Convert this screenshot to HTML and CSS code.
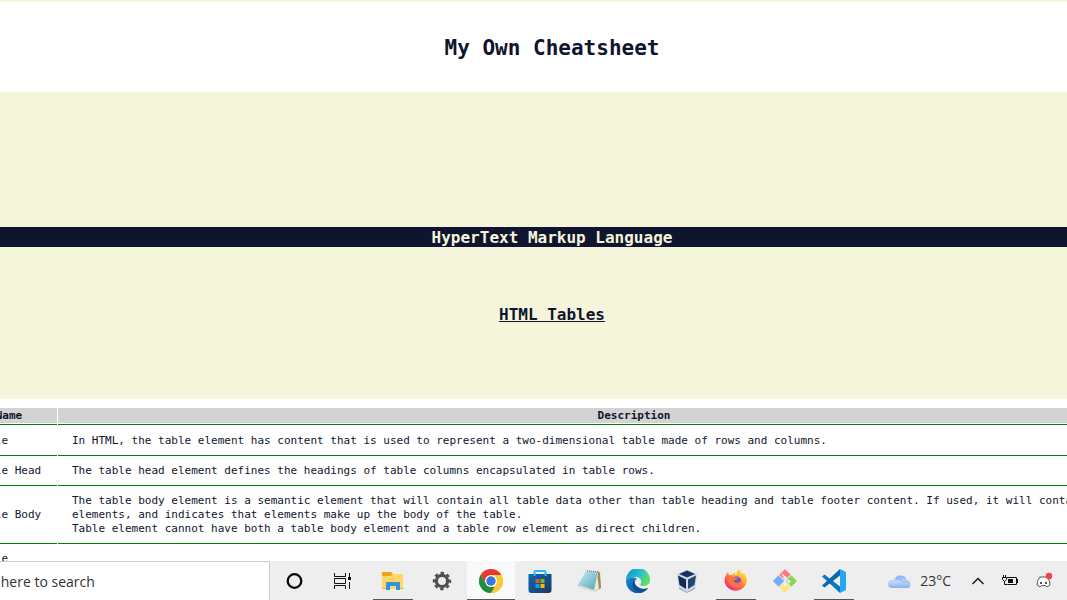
FILE: index.html
```html
<!DOCTYPE html>
<html lang="en">
<head>
<meta charset="utf-8">
<title>My Own Cheatsheet</title>
<link rel="stylesheet" href="styles.css">
</head>
<body>
<main class="viewport">
  <div class="page">
    <header class="title-band"><h1>My Own Cheatsheet</h1></header>
    <h2 class="language">HyperText Markup Language</h2>
    <h3 class="topic">HTML Tables</h3>
    <section class="sheet">
      <table>
        <thead>
          <tr><th class="name">Name</th><th>Description</th></tr>
        </thead>
        <tbody>
          <tr><td>Table</td><td>In HTML, the table element has content that is used to represent a two-dimensional table made of rows and columns.</td></tr>
          <tr><td>Table Head</td><td>The table head element defines the headings of table columns encapsulated in table rows.</td></tr>
          <tr><td>Table Body</td><td>The table body element is a semantic element that will contain all table data other than table heading and table footer content. If used, it will contain all<br>elements, and indicates that elements make up the body of the table.<br>Table element cannot have both a table body element and a table row element as direct children.</td></tr>
          <tr><td>Table</td><td></td></tr>
        </tbody>
      </table>
    </section>
  </div>
</main>
<footer class="taskbar">
  <div class="search"><input type="text" aria-label="Search" placeholder="Type here to search"></div>
  <nav class="apps">
    <button aria-label="Cortana"><svg width="24" height="24" viewBox="0 0 24 24"><circle cx="11.500" cy="12" r="6.8" fill="none" stroke="#0b0b0b" stroke-width="2.300"/></svg></button>
    <button aria-label="Task view"><svg width="24" height="24" viewBox="0 0 24 24" fill="none" stroke="#111" stroke-width="1"><path d="M2.500 4v3.500h11V4M2.500 20v-3.500h11V20M2.500 9.500h11v5h-11zM17.500 4v4M17.500 13v7"/><path d="M16 8h3v3h-3z" fill="#111" stroke="none"/></svg></button>
    <button class="running" aria-label="File Explorer"><svg width="24" height="24" viewBox="0 0 24 24"><path d="M1 4q0-1 1-1h8l2 2h9q1 0 1 1v14H1z" fill="#e7a613"/><path d="M1 7h9l2-2h10v15H1z" fill="#ffd765"/><path d="M5 21v-7q0-1 1-1h12q1 0 1 1v7h-4v-4H9v4z" fill="#3293df"/><path d="M1 19h4v1H1zM19 19h4v1h-4z" fill="#efb83a"/></svg></button>
    <button aria-label="Settings"><svg width="24" height="24" viewBox="0 0 24 24" fill="none" stroke="#505050"><circle cx="12" cy="12" r="5.600" stroke-width="3.200"/><circle cx="12" cy="12" r="8" stroke-width="2.400" stroke-dasharray="3.400 2.883" stroke-dashoffset="1.700"/></svg></button>
    <button class="running active" aria-label="Chrome"><svg width="24" height="24" viewBox="0 0 24 24"><circle cx="12" cy="12" r="12" fill="#fcc934"/><path d="M12 12 6.800 15 1.600 6A12 12 0 0 1 22.400 6H12z" fill="#e33b2e"/><path d="M1.600 6 6.800 15Q9 18.500 12 18h5.200L12 24A12 12 0 0 1 1.600 6z" fill="#1e8e3e"/><path d="M12 24l5.200-9Q19 10 17 6h5.400A12 12 0 0 1 12 24z" fill="#fcc934"/><circle cx="12" cy="12" r="6" fill="#fff"/><circle cx="12" cy="12" r="4.700" fill="#3478e5"/></svg></button>
    <button aria-label="Microsoft Store"><svg width="24" height="24" viewBox="0 0 24 24"><defs><linearGradient id="bag" x2="1" y2="1"><stop stop-color="#0969b9"/><stop offset="1" stop-color="#24365e"/></linearGradient></defs><path d="M.5 5h23v16q0 3-3 3h-17q-3 0-3-3z" fill="url(#bag)"/><path d="M6.500 7V3q0-1 1-1h9q1 0 1 1v4" fill="none" stroke="#27bdf2" stroke-width="2"/><path d="M7.500 10h4v4h-4z" fill="#f25022"/><path d="M12.500 10h4v4h-4z" fill="#7fba00"/><path d="M7.500 15h4v4h-4z" fill="#00a4ef"/><path d="M12.500 15h4v4h-4z" fill="#ffb900"/></svg></button>
    <button aria-label="Notepad"><svg width="24" height="24" viewBox="0 0 24 24"><defs><linearGradient id="pad" x2="1" y2="1"><stop stop-color="#d0eef2"/><stop offset="1" stop-color="#4da3b8"/></linearGradient></defs><path d="M21 2l2 2 1 15-5 3z" fill="#a78452"/><path d="M20 3l2 17-4 2z" fill="#eee6d3"/><path d="M9 2l12 1-4 18L1 16z" fill="url(#pad)"/><path d="M1 16l16 5 1 1.500L2 18z" fill="#f9f9f5" stroke="#aaa" stroke-width=".5"/><path d="M10 1.800l11 1" stroke="#777" stroke-width="1.200" stroke-dasharray="1 1"/></svg></button>
    <button aria-label="Edge"><svg width="24" height="24" viewBox="0 0 24 24"><defs><linearGradient id="wave" x2="1" y2=".4"><stop stop-color="#168bd1"/><stop offset=".6" stop-color="#25bfd2"/><stop offset="1" stop-color="#64df62"/></linearGradient><linearGradient id="deep" x2="1" y2="1"><stop stop-color="#1689d4"/><stop offset="1" stop-color="#0b4d92"/></linearGradient></defs><path d="M0 12A12 12 0 0 1 24 10c1 5-3 7-7 7-3 0-3-1-2-3 1-3-1-6-6-6S1 9 0 12z" fill="url(#wave)"/><path d="M0 12c1-4 8-5 11-2-4 2-3 9 1 10 4 2 7 0 10-1A12 12 0 0 1 0 12z" fill="url(#deep)"/><path d="M8 11c-4 6 0 12 6 12 4 0 7-2 8-4-3 2-13 1-14-8z" fill="#0d4f91"/></svg></button>
    <button aria-label="VirtualBox"><svg width="24" height="24" viewBox="0 0 24 24"><path d="M4 16l8 3 8-3v4l-8 4-8-4z" fill="#9aa9bd"/><path d="M12 .5 22 5l-1.500 13L12 23l-8.500-5L2 5z" fill="#d1dae7"/><path d="M12 1.500 20 5l-8 3.500L4 5z" fill="#17345e"/><path d="M3 6.500l8 4V20l-6.500-4z" fill="#102a50"/><path d="M21 6.500l-8 4V20l6.500-4z" fill="#24466e"/></svg></button>
    <button class="running" aria-label="Firefox"><svg width="24" height="24" viewBox="0 0 24 24"><defs><linearGradient id="fox" x1=".9" x2=".2" y2="1"><stop stop-color="#fff04a"/><stop offset=".4" stop-color="#ffad2b"/><stop offset=".65" stop-color="#ff613c"/><stop offset="1" stop-color="#ed209c"/></linearGradient></defs><path d="M4 3l1 3 3 0 3-3 0 3 2-1Q12 3 15 0q1 3 4 5l1-1q3 4 3 8A11.500 11.500 0 0 1 .5 13Q.5 7 4 3z" fill="url(#fox)"/><circle cx="12.500" cy="12.500" r="5" fill="#7650dc"/><path d="M3 8q4-2 6 0l5 1q-1 2-4 2 0 3 3 3 4 0 4-4 3 7-3 9Q5 20 3 8z" fill="#ff743e"/></svg></button>
    <button aria-label="Git"><svg width="24" height="24" viewBox="0 0 24 24"><g transform="rotate(45 12 12)"><path d="M3.500 4.500q0-1 1-1h7v8h-8z" fill="#ff7778"/><path d="M12.500 3.500h7q1 0 1 1v7h-8z" fill="#8bd35d"/><path d="M3.500 12.500h8v8h-7q-1 0-1-1z" fill="#79aaff"/><path d="M12.500 12.500h8v7q0 1-1 1h-7z" fill="#ffe57d"/></g><path d="M9 5l3 3v8M12 9l4 4" stroke="#eee" stroke-width="1.400" fill="none"/><circle cx="12" cy="8.500" r="1.700" fill="#eee"/><circle cx="12" cy="16" r="1.700" fill="#eee"/><circle cx="16" cy="12.500" r="1.500" fill="#eee"/></svg></button>
    <button class="running" aria-label="Visual Studio Code"><svg width="24" height="24" viewBox="0 0 24 24"><path d="M0 7.500 2.500 5.500 18 17.500V24z" fill="#0878c0"/><path d="M0 16.500l2.500 2L18 6.500V0z" fill="#0869ad"/><path d="M18 0l6 3v18l-6 3z" fill="#25a7f2"/></svg></button>
  </nav>
  <div class="tray">
    <button class="weather" aria-label="Weather, 23 degrees"><svg width="24" height="24" viewBox="0 0 24 24"><defs><linearGradient id="sky" x2="0" y2="1"><stop stop-color="#7fb0f7"/><stop offset=".5" stop-color="#c2d8fb"/><stop offset="1" stop-color="#88aff0"/></linearGradient></defs><path d="M4 19a4 4 0 0 1 0-8h2a7 7 0 0 1 13 0 4.200 4.200 0 0 1 1 8z" fill="url(#sky)"/><path d="M8 10q5-1 7 4 3-3 7 0" fill="none" stroke="#85a9e9" stroke-width=".8"/></svg><span>23°C</span></button>
    <button aria-label="Show hidden icons"><svg width="14" height="14" viewBox="0 0 14 14"><path d="M1.500 10 7 4.500l5.500 5.500" fill="none" stroke="#111" stroke-width="1.300"/></svg></button>
    <button aria-label="Battery"><svg width="18" height="14" viewBox="0 0 18 14"><path d="M6 3.500h9.500v7h-9M16.500 5v4" fill="none" stroke="#111"/><path d="M7 5h5v4H7z" fill="#111"/><path d="M2.500 1v2M4.500 1v2M1.500 3.500h4v2l-2 2-2-2zM3.500 7v3.500h3" fill="none" stroke="#111"/></svg></button>
    <button aria-label="Discord"><svg width="18" height="18" viewBox="0 0 18 18"><path d="M5 5h7q3 3 3 8l-3 2-1.500-1.500h-4L5 15l-3-2q0-5 3-8z" fill="#fff" stroke="#555" stroke-width="1"/><path d="M5 10h2v2H5zM10 10h2v2h-2z" fill="#555"/><circle cx="14" cy="4" r="3.200" fill="#f04444"/></svg></button>
  </div>
</footer>
</body>
</html>
```
FILE: styles.css
```css
* { box-sizing: border-box; }

body {
  margin: 0;
  height: 100vh;
  display: flex;
  flex-direction: column;
  overflow: hidden;
  background: #fff;
  color: #0f152e;
  font-family: "DejaVu Sans Mono", "Liberation Mono", monospace;
}

.viewport {
  flex: 1;
  min-height: 0;
  overflow: hidden;
}

/* The sheet is wider than the window and scrolled sideways. */
.page {
  margin: 0 -144px 0 -107px;
  padding-top: 2px;
  background: #f5f5dc;
}

h1, h2, h3 {
  margin: 0;
  text-align: center;
  font-weight: 700;
}

.title-band {
  padding: 33px 0 31px;
  background: #fff;
}

h1 {
  font-size: 21px;
  line-height: 26px;
}

.language {
  margin-top: 135px;
  padding-top: 1px;
  background: #0f152e;
  color: #f5f5dc;
  font-size: 16px;
  line-height: 19px;
}

.topic {
  padding: 58px 0 74px;
  font-size: 16px;
  line-height: 20px;
  text-decoration: underline;
}

.sheet {
  padding: 8px 0 0 67px;
  background: #fff;
}

table {
  width: 100%;
  table-layout: fixed;
  border-spacing: 1px;
  font-size: 11px;
  line-height: 14px;
}

th {
  padding: 1px 0 0;
  background: #d3d3d3;
}

.name { width: 96px; }

td {
  padding: 7px 14px;
  border-bottom: 1px solid #008000;
  white-space: nowrap;
}

tbody tr:first-child td {
  padding: 9px 14px 7px;
  border-top: 1px solid #008000;
}

.taskbar {
  flex: none;
  display: flex;
  background: #eee;
  font-family: "Open Sans", "Noto Sans", sans-serif;
}

button, input {
  border: 0;
  padding: 0;
  background: none;
  font: inherit;
  color: #333;
}

.search {
  width: 270px;
  overflow: hidden;
  display: flex;
  background: #fff;
  border: 1px solid #ccc;
  border-width: 1px 1px 0 0;
}

.search input {
  width: 303px;
  flex: none;
  margin-left: -34px;
  font-size: 14px;
  outline: 0;
}

.search input::placeholder { color: #333; opacity: 1; }

.apps {
  display: flex;
  gap: 1px;
  padding-left: 1px;
}

.apps button {
  width: 48px;
  height: 39px;
  display: flex;
  align-items: center;
  justify-content: center;
}

.running {
  background: linear-gradient(#555, #555) bottom / 40px 1px no-repeat;
}

.apps .active {
  background: linear-gradient(#555, #555) bottom / 100% 1px no-repeat #f9f9f9;
}

.tray {
  margin-left: auto;
  padding-right: 14px;
  display: flex;
  align-items: center;
  gap: 16px;
}

.tray button { display: flex; align-items: center; }

.tray .weather {
  gap: 8px;
  margin-right: 4px;
  font-size: 14px;
}
```
